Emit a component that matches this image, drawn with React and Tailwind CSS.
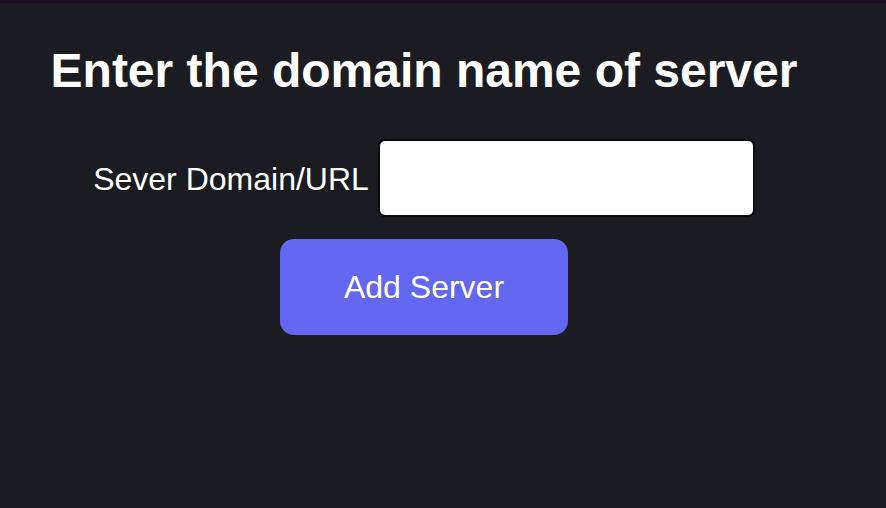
export default function App() {
  return (
    <div
      className="min-h-[508px] w-full bg-[#1b1c21] text-white"
      style={{ fontFamily: '"Liberation Sans", Arial, sans-serif' }}
    >
      <div className="h-[3px] bg-[#1f0823]" />
      <div className="flex w-[848px] flex-col items-center pt-[39px]">
        <h1 className="text-[48px] font-bold leading-[58px]">
          Enter the domain name of server
        </h1>
        <div className="mt-[39px] flex items-center gap-[9px]">
          <label htmlFor="server" className="pt-[2px] text-[32px] leading-[40px]">
            Sever Domain/URL
          </label>
          <input
            id="server"
            type="text"
            className="h-[78px] w-[377px] rounded-[7px] border-2 border-[#0c0c0e] bg-white px-3 text-[28px] text-black outline-none"
          />
        </div>
        <button className="mt-[22px] h-[96px] w-[288px] rounded-[14px] bg-[#6366f1] text-[32px] text-white">
          Add Server
        </button>
      </div>
    </div>
  );
}
